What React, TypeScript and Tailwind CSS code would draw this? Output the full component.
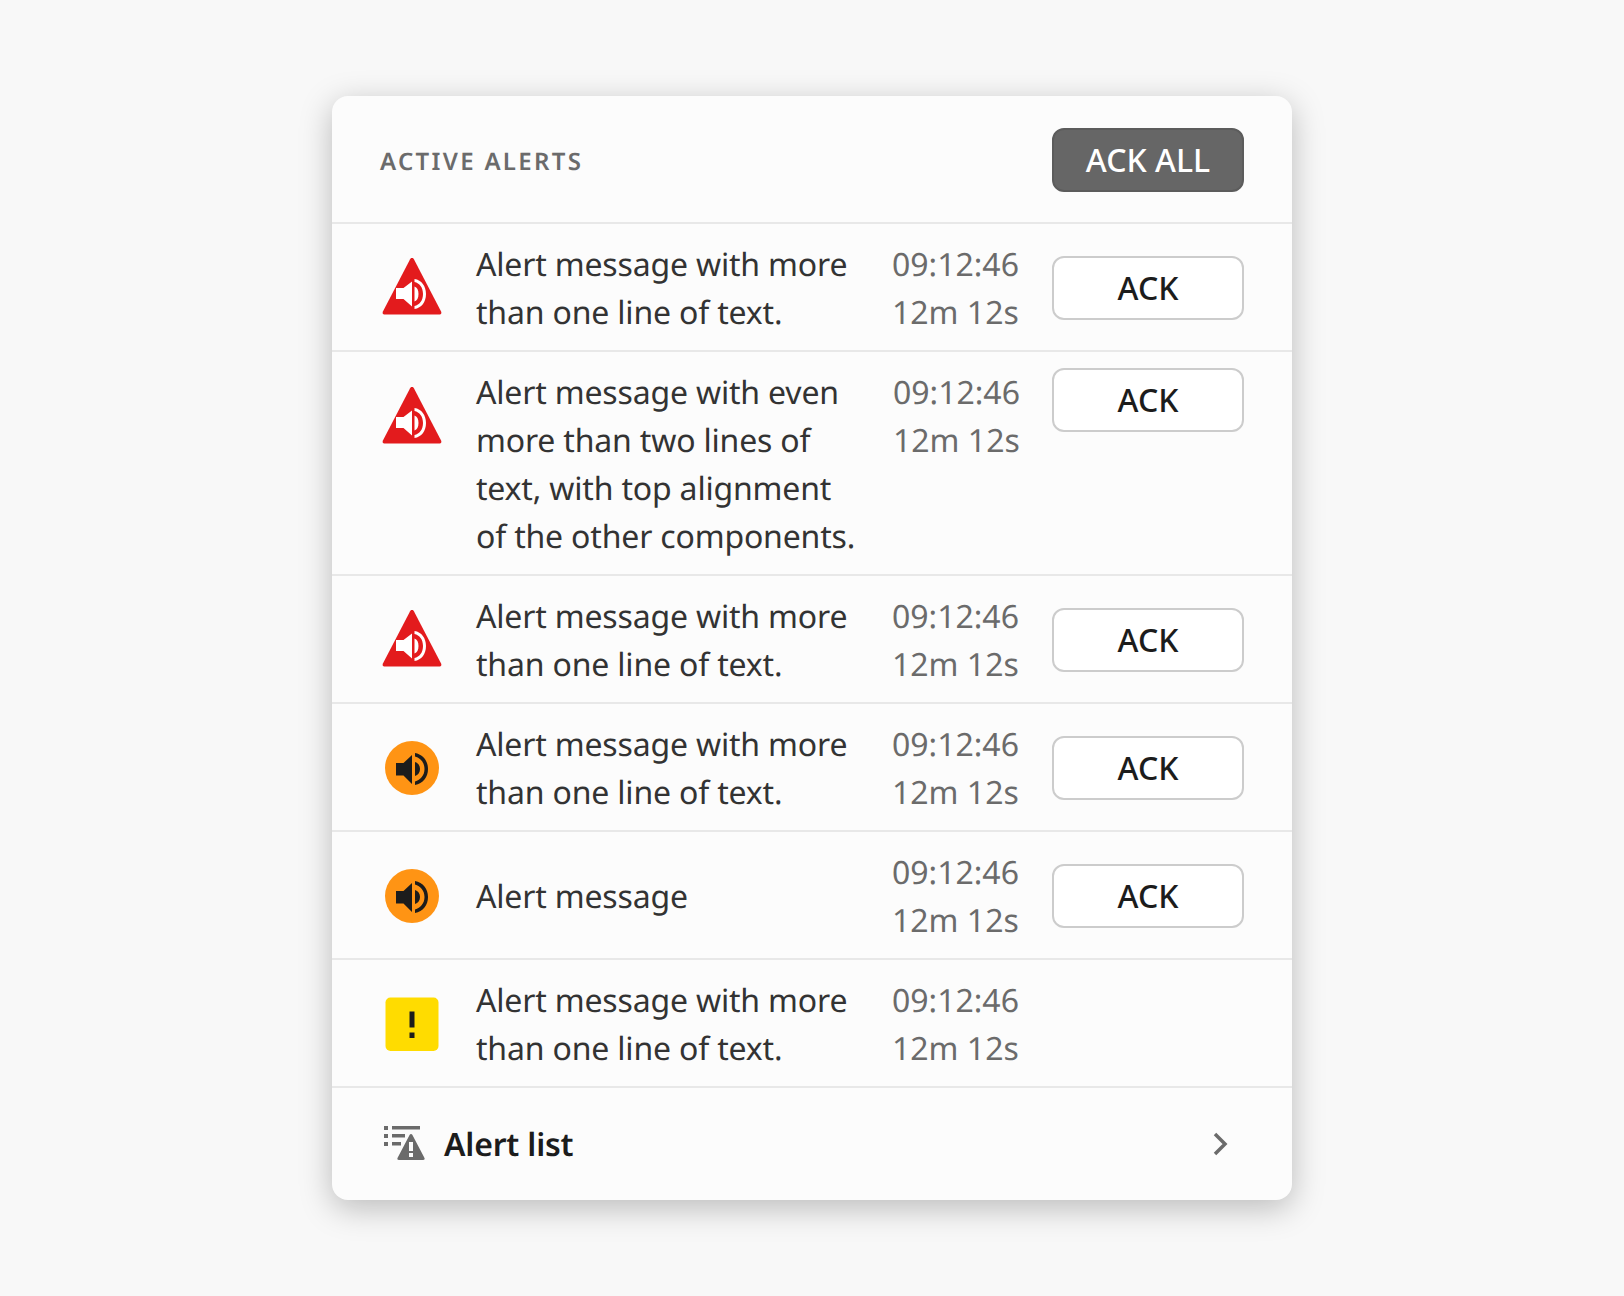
const font = { fontFamily: '"Noto Sans", sans-serif' };

type Level = 'critical' | 'major' | 'minor';

interface Alert {
  level: Level;
  message: string[];
  ack?: boolean;
  top?: boolean;
}

const alerts: Alert[] = [
  { level: 'critical', message: ['Alert message with more', 'than one line of text.'], ack: true },
  {
    level: 'critical',
    message: ['Alert message with even', 'more than two lines of', 'text, with top alignment', 'of the other components.'],
    ack: true,
    top: true,
  },
  { level: 'critical', message: ['Alert message with more', 'than one line of text.'], ack: true },
  { level: 'major', message: ['Alert message with more', 'than one line of text.'], ack: true },
  { level: 'major', message: ['Alert message'], ack: true },
  { level: 'minor', message: ['Alert message with more', 'than one line of text.'] },
];

function AlertIcon({ level }: { level: Level }) {
  if (level === 'critical') {
    return (
      <svg width="64" height="64" viewBox="0 0 64 64">
        <path d="M32 2c.9 0 1.500.5 1.900 1.200l27.300 52.500c.6 1.300-.2 2.800-1.500 2.800H4.300c-1.300 0-2.100-1.500-1.500-2.800l27.300-52.500C30.500 2.500 31.100 2 32 2z" fill="#e31b1d" />
        <path d="M16 32h7.500l8.500-6.500v25L23.500 43H16z" fill="#fff" />
        <path d="M34.500 30.500c2.500.7 4 3.500 4 7.500s-1.500 6.800-4 7.500z" fill="#fff" />
        <path d="M34.500 23C41.500 24 46 30 46 38s-4.500 14-11.500 15v-3c5-1 8.500-5.500 8.500-12s-3.500-11-8.500-12z" fill="#fff" />
      </svg>
    );
  }
  if (level === 'major') {
    return (
      <svg width="64" height="64" viewBox="0 0 64 64">
        <circle cx="32" cy="32" r="27" fill="#ff9414" />
        <path d="M16 27h7.500l8.500-8v29l-8.500-8.500H16z" fill="#1c1c1c" />
        <path d="M35 26c3 .8 5 3.500 5 7s-2 6.200-5 7z" fill="#1c1c1c" />
        <path d="M35 17c8 1.500 13 8 13 16s-5 14.500-13 16v-3.500c5.500-1.300 9.500-6.300 9.500-12.500S40.500 21.800 35 20.500z" fill="#1c1c1c" />
      </svg>
    );
  }
  return (
    <svg width="64" height="64" viewBox="0 0 64 64">
      <rect x="5.500" y="5.500" width="53" height="53.500" rx="5" fill="#ffdc00" />
      <rect x="29.500" y="19.500" width="5" height="16" fill="#1c1c1c" />
      <rect x="29.500" y="40.500" width="5" height="5.500" fill="#1c1c1c" />
    </svg>
  );
}

function AlertRow({ alert }: { alert: Alert }) {
  return (
    <div className={`flex ${alert.top ? 'items-start' : 'items-center'} border-t-2 border-[#e8e8e8] pb-[14px] pl-[48px] pr-[48px] pt-[16px]`}>
      <div className={`flex h-[64px] w-[64px] shrink-0 items-center justify-center ${alert.top ? 'mt-[17px]' : ''}`}>
        <AlertIcon level={alert.level} />
      </div>
      <div className="ml-[32px] w-[416px] shrink-0 translate-y-px text-[32px] leading-[48px] tracking-[-0.18px] text-[#333333]">
        {alert.message.map(line => (
          <div key={line} className="whitespace-nowrap">{line}</div>
        ))}
      </div>
      <div className={`translate-y-px text-[32px] leading-[48px] text-[#6b6b6b] whitespace-nowrap ${alert.top ? 'ml-[1px]' : ''}`}>
        <div>09:12:46</div>
        <div>12m 12s</div>
      </div>
      {alert.ack && (
        <button className="ml-auto h-[64px] w-[192px] shrink-0 rounded-[12px] border-2 border-[#cccccc] bg-white text-[32px] font-medium leading-none text-[#1c1c1c]">
          ACK
        </button>
      )}
    </div>
  );
}

export default function App() {
  return (
    <div className="flex min-h-[1296px] justify-center bg-[#f8f8f8] pt-[96px] [text-rendering:geometricPrecision]" style={font}>
      <div className="h-fit w-[960px] rounded-[16px] bg-[#fcfcfc] shadow-[0_8px_32px_rgba(0,0,0,0.25)]">
        <div className="flex h-[126px] items-center justify-between pl-[48px] pr-[48px] pt-[2px]">
          <span className="pt-[4px] text-[24px] font-semibold tracking-[0.096em] text-[#6b6b6b]">ACTIVE ALERTS</span>
          <button className="h-[64px] w-[192px] rounded-[12px] border-2 border-[#5c5c5c] bg-[#666666] text-[32px] font-medium leading-none text-white">
            ACK ALL
          </button>
        </div>
        {alerts.map((alert, i) => (
          <AlertRow key={i} alert={alert} />
        ))}
        <div className="flex h-[114px] items-center border-t-2 border-[#e8e8e8] pl-[48px] pr-[56px]">
          <svg width="48" height="48" viewBox="0 0 48 48" className="shrink-0">
            <g fill="#6b6b6b">
              <rect x="4" y="6" width="4" height="4" />
              <rect x="12" y="6" width="28" height="3.500" />
              <rect x="4" y="14" width="4" height="4" />
              <rect x="12" y="14" width="13" height="3.500" />
              <rect x="4" y="22" width="4" height="4" />
              <rect x="12" y="22" width="9" height="3.500" />
              <path d="M31 14c.5 0 1 .3 1.300.8l12.200 23.200c.5 1-.2 2-1.300 2H18.800c-1.100 0-1.800-1-1.300-2l12.200-23.200c.3-.5.800-.8 1.300-.8z" />
            </g>
            <rect x="29" y="22" width="4" height="9" fill="#fcfcfc" />
            <rect x="29" y="33" width="4" height="4" fill="#fcfcfc" />
          </svg>
          <span className="ml-[16px] translate-y-px text-[32px] font-semibold leading-[48px] tracking-[-0.2px] text-[#1c1c1c]">Alert list</span>
          <svg width="32" height="32" viewBox="0 0 32 32" className="ml-auto">
            <path d="M11 6l10 10-10 10" fill="none" stroke="#6b6b6b" strokeWidth="3.500" />
          </svg>
        </div>
      </div>
    </div>
  );
}
